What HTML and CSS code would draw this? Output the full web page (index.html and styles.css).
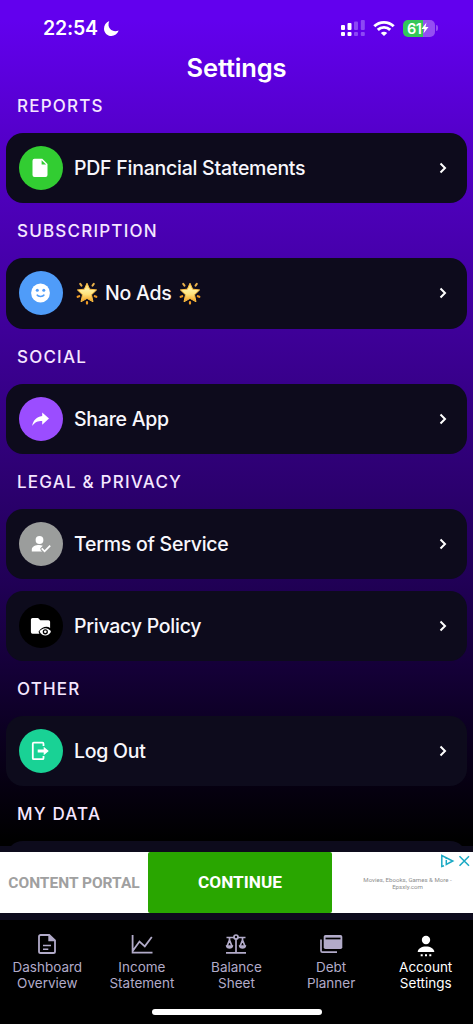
FILE: index.html
```html
<!DOCTYPE html>
<html lang="en">
<head>
<meta charset="utf-8">
<meta name="viewport" content="width=device-width, initial-scale=1">
<title>Settings</title>
<link rel="stylesheet" href="styles.css">
</head>
<body>
<svg width="0" height="0" class="defs" aria-hidden="true">
  <defs>
    <linearGradient id="shine" x1="0" y1="0" x2="0" y2="1"><stop offset="0" stop-color="#ffd55c"/><stop offset=".35" stop-color="#fff0a0"/><stop offset=".6" stop-color="#ffe27a"/><stop offset="1" stop-color="#f59b1c"/></linearGradient>
    <symbol id="star" viewBox="0 0 22 24">
      <path d="M11 2.200l2.700 6 6.900.7-5.100 4.900 1.500 7-6-3.400-6 3.400 1.500-7L1.400 8.900l6.900-.7z" fill="url(#shine)" stroke="#f9bb40" stroke-width="1" stroke-linejoin="round"/>
      <path d="M4.200 2.800l1.300 1.800M17.800 2.800l-1.300 1.800" stroke="#e8b04a" stroke-width="2" stroke-linecap="round"/>
      <path d="M1.700 15.800l1.500-.6M20.300 15.800l-1.500-.6M11 21v1.600" stroke="#ee9a25" stroke-width="2.200" stroke-linecap="round"/>
    </symbol>
    <symbol id="chev" viewBox="0 0 10 14"><path d="M2.500 2.500L7 7l-4.500 4.500" fill="none" stroke="#fff" stroke-width="2"/></symbol>
  </defs>
</svg>
<div class="screen">
  <div class="status">
    <div class="clock"><span class="time">22:54</span>
      <svg width="17" height="17" viewBox="0 0 17 17"><path d="M6.300 1C5 4 5.300 7 7.200 9.100c2 2.200 5.300 2.700 8.500 1.500C14.500 14 11.600 16 8.400 16 4.300 16 1 12.800 1 8.700 1 5.200 3 2.200 6.300 1z" fill="#fff"/></svg>
    </div>
    <div class="signals">
      <svg width="26" height="18" viewBox="0 0 26 18">
        <g fill="#fff"><rect x="1" y="6" width="4" height="5" rx="1"/><rect x="7.500" y="4" width="4" height="7" rx="1"/><rect x="1" y="13" width="4" height="4" rx="1"/><rect x="7.500" y="13" width="4" height="4" rx="1"/></g>
        <g fill="#8c49f4"><rect x="14" y="2.500" width="4" height="8.500" rx="1"/><rect x="20.800" y="1" width="4" height="10" rx="1"/><rect x="14" y="13" width="4" height="4" rx="1"/><rect x="20.800" y="13" width="4" height="4" rx="1"/></g>
      </svg>
      <svg class="wifi" width="22" height="17" viewBox="0 0 22 17"><g fill="none" stroke="#fff" stroke-width="2.900"><path d="M1.300 6.300c5.400-5.300 14-5.300 19.400 0"/><path d="M4.800 9.900c3.500-3.400 8.900-3.400 12.400 0"/></g><path d="M7.800 12.900c1.800-1.700 4.600-1.700 6.400 0L11 16z" fill="#fff"/></svg>
      <div class="battery"><span class="level">61</span><svg width="8" height="12" viewBox="0 0 8 12"><path d="M5.500.5L.5 7h3L2.500 11.500l5-6.500h-3z" fill="#fff"/></svg></div><i class="cap"></i>
    </div>
  </div>
  <h1 class="title">Settings</h1>
  <main class="list">
    <h2 class="heading">REPORTS</h2>
    <div class="card">
      <span class="badge green"><svg width="24" height="24" viewBox="0 0 24 24"><path d="M5.500 2.700h7.800l5.200 5.200v11.200a2 2 0 0 1-2 2h-11a2 2 0 0 1-2-2V4.700a2 2 0 0 1 2-2z" fill="#fff"/><path d="M12.600 4.300v4.300h4.500z" fill="#32cd32"/></svg></span>
      <span class="label">PDF Financial Statements</span><svg class="go"><use href="#chev"/></svg>
    </div>
    <h2 class="heading">SUBSCRIPTION</h2>
    <div class="card">
      <span class="badge blue"><svg width="24" height="24" viewBox="0 0 24 24"><circle cx="11.500" cy="12" r="9.400" fill="#fff"/><g fill="#4f9cf9"><circle cx="8.300" cy="9.200" r="1.500"/><circle cx="14.800" cy="9.200" r="1.500"/></g><path d="M7.800 13.600c1.600 2.500 5.900 2.500 7.500 0" fill="none" stroke="#4f9cf9" stroke-width="1.700"/></svg></span>
      <span class="label ads"><svg class="star"><use href="#star"/></svg><span>No Ads</span><svg class="star"><use href="#star"/></svg></span><svg class="go"><use href="#chev"/></svg>
    </div>
    <h2 class="heading">SOCIAL</h2>
    <div class="card">
      <span class="badge violet"><svg width="24" height="24" viewBox="0 0 24 24"><path d="M13.200 5.500l6.800 6-6.800 6.300v-3.900c-4.600 0-7.600 1.300-10 5C4 14 7 9.800 13.200 9z" fill="#fff"/></svg></span>
      <span class="label">Share App</span><svg class="go"><use href="#chev"/></svg>
    </div>
    <h2 class="heading">LEGAL &amp; PRIVACY</h2>
    <div class="card">
      <span class="badge gray"><svg width="24" height="24" viewBox="0 0 24 24"><circle cx="10.500" cy="8" r="3.900" fill="#fff"/><path d="M2.800 19.500v-2c0-3 4-4.400 7.200-4.400 1.500 0 2.800.3 3.800.7l-2.700 2.800 2.900 2.900z" fill="#fff"/><path d="M12.700 16.400l2.900 2.900 5.600-5.600" fill="none" stroke="#9b9d9c" stroke-width="4"/><path d="M12.700 16.400l2.900 2.900 5.600-5.600" fill="none" stroke="#fff" stroke-width="1.800"/></svg></span>
      <span class="label">Terms of Service</span><svg class="go"><use href="#chev"/></svg>
    </div>
    <div class="card second">
      <span class="badge black"><svg width="24" height="24" viewBox="0 0 24 24"><path d="M3.500 4h5.600l2.200 2.200h8.200a1.600 1.600 0 0 1 1.600 1.600V14c-3.200-2.300-8.600-1.200-11.600 3.800l.9 1.900H3.500a1.600 1.600 0 0 1-1.600-1.600V5.600A1.600 1.600 0 0 1 3.500 4z" fill="#fff"/><path d="M10.600 17.800c2.300-4.800 9.100-4.800 11.400 0-2.300 4.800-9.100 4.800-11.400 0z" fill="#fff"/><circle cx="16.300" cy="17.800" r="2.600"/><circle cx="16.300" cy="17.800" r="1.300" fill="#fff"/></svg></span>
      <span class="label">Privacy Policy</span><svg class="go"><use href="#chev"/></svg>
    </div>
    <h2 class="heading">OTHER</h2>
    <div class="card">
      <span class="badge teal"><svg width="24" height="24" viewBox="0 0 24 24"><path d="M14.500 7V4.700a1 1 0 0 0-1-1H4.800a1 1 0 0 0-1 1v14.500a1 1 0 0 0 1 1h8.700a1 1 0 0 0 1-1V17" fill="none" stroke="#fff" stroke-width="1.800"/><path d="M8.700 10.400h6V7.800l5.100 4.200-5.100 4.200v-2.600h-6z" fill="#fff"/></svg></span>
      <span class="label">Log Out</span><svg class="go"><use href="#chev"/></svg>
    </div>
    <h2 class="heading">MY DATA</h2>
    <div class="card"></div>
  </main>
  <section class="adzone">
    <div class="ad">
      <div class="brand"><span>CONTENT PORTAL</span></div>
      <div class="cta"><span>CONTINUE</span></div>
      <div class="info"><p>Movies, Ebooks, Games &amp; More -<br>Epsxly.com</p>
        <svg class="adicons" width="30" height="14" viewBox="0 0 30 14" fill="none" stroke="#1aa9c4" stroke-width="1.500"><path d="M4 11.800l-2.200.7V1.500L12.800 7l-6.500 3.500V6"/><path d="M6.300 3.700v1.400"/><path d="M19.500 2.200l9.500 9.600M29 2.200l-9.500 9.600"/></svg>
      </div>
    </div>
  </section>
  <nav class="tabs">
    <a class="tab"><svg width="24" height="24" viewBox="0 0 24 24"><path d="M14.200 3H5.600A1.600 1.600 0 0 0 4 4.600v14.800A1.600 1.600 0 0 0 5.600 21h12.800a1.600 1.600 0 0 0 1.600-1.600V8.500z" fill="none" stroke="currentColor" stroke-width="1.800"/><path d="M13.300 2.500v6.800h6.900z" fill="currentColor"/><path d="M8 13.500h8M8 17.300h5.300" stroke="currentColor" stroke-width="1.600"/></svg><span>Dashboard<br>Overview</span></a>
    <a class="tab"><svg width="24" height="24" viewBox="0 0 24 24"><path d="M2.600 3v17.600H22.500M3 18.500l6.500-9 5.300 4.800L21.800 5" fill="none" stroke="currentColor" stroke-width="1.800"/></svg><span>Income<br>Statement</span></a>
    <a class="tab"><svg width="24" height="24" viewBox="0 0 24 24"><g fill="none" stroke="currentColor" stroke-width="1.700"><circle cx="12" cy="5" r="2"/><path d="M12 7v13.500M2 20.800h20M2.500 5.500H10M14 5.500h7.500M5.500 6v2L3 14.300M5.500 8L8 14.300M18.500 6v2L16 14.300M18.500 8l2.500 6.300"/></g><path d="M1.700 13.300h7.600c0 4.700-7.600 4.700-7.600 0zM14.700 13.300h7.600c0 4.700-7.600 4.700-7.600 0z" fill="currentColor"/></svg><span>Balance<br>Sheet</span></a>
    <a class="tab"><svg width="24" height="24" viewBox="0 0 24 24"><path d="M6.500 3h15a1.800 1.800 0 0 1 1.800 1.800v10.400a1.800 1.800 0 0 1-1.800 1.800h-15a1.800 1.800 0 0 1-1.800-1.800V4.800A1.800 1.800 0 0 1 6.500 3z" fill="currentColor"/><path d="M6.500 6.500h15" stroke="#000" stroke-width="1.700"/><path d="M2 7.500v11.300a1.400 1.400 0 0 0 1.400 1.400H18" fill="none" stroke="currentColor" stroke-width="1.700"/></svg><span>Debt<br>Planner</span></a>
    <a class="tab active"><svg width="24" height="26" viewBox="0 0 24 26"><g fill="currentColor"><circle cx="12" cy="8" r="4.200"/><path d="M3.700 20c0-7.500 16.600-7.500 16.600 0z"/><path d="M6.700 22.300h2v2h-2zM11 22.300h2v2h-2zM15.300 22.300h2v2h-2z"/></g></svg><span>Account<br>Settings</span></a>
  </nav>
  <div class="home"></div>
</div>
</body>
</html>
```
FILE: styles.css
```css
* { box-sizing: border-box; }
body { margin: 0; background: #000; }
.defs { position: absolute; }
.screen {
  width: 473px; height: 1024px; overflow: hidden;
  display: flex; flex-direction: column;
  font-family: Inter, "Liberation Sans", sans-serif; color: #fff;
  background: linear-gradient(180deg, #6200ee 0, #6200ee 20px, #5500cc 130px, #3d0096 340px, #200055 585px, #0b0020 735px, #000 840px);
}
.status { height: 54px; padding: 2px 35px 0 43px; display: flex; align-items: center; justify-content: space-between; }
.clock { display: flex; align-items: center; gap: 5px; }
.time { font-size: 19.500px; font-weight: 600; letter-spacing: -.2px; }
.signals { display: flex; align-items: center; }
.wifi { margin-left: 7px; }
.battery {
  margin-left: 8px; width: 32px; height: 17px; border-radius: 5px; padding-left: 4px;
  display: flex; align-items: center; background: linear-gradient(90deg, #34c759 61%, #944ff2 61%);
}
.level { font-size: 14.500px; font-weight: 600; letter-spacing: -.5px; }
.cap { width: 2px; height: 6px; margin-left: 1px; border-radius: 0 3px 3px 0; background: #944ff2; }
.title { margin: 0; height: 28px; line-height: 28px; text-align: center; font-size: 25.500px; font-weight: 600; letter-spacing: -.15px; }
.list { height: 764px; overflow: hidden; padding: 0 6px; display: flex; flex-direction: column; }
.heading { margin: 0; flex: none; height: 54.900px; padding: 1px 11px 0; line-height: 54px; font-size: 17px; font-weight: 450; letter-spacing: 1.200px; color: #f5e6ff; }
.heading:first-child { height: 51px; padding-top: 0; line-height: 48px; }
.card { flex: none; height: 70.400px; padding: 0 19px 0 13px; border-radius: 17px; background: #0d0b1c; display: flex; align-items: center; }
.second { margin-top: 11.500px; }
.badge { width: 44px; height: 44px; border-radius: 50%; display: flex; align-items: center; justify-content: center; }
.green { background: #32cd32; }
.blue { background: #4f9cf9; }
.violet { background: #9b4dff; }
.gray { background: #9b9d9c; }
.black { background: #000; }
.teal { background: #19d295; }
.label { margin-left: 11px; font-size: 19.500px; line-height: 24px; font-weight: 450; letter-spacing: -.25px; color: #f8f7fc; white-space: nowrap; }
.ads { margin-left: 12.500px; display: flex; align-items: center; gap: 7.500px; }
.star { width: 22px; height: 24px; }
.go { width: 10px; height: 14px; margin-left: auto; }
.adzone { height: 74px; padding: 6px 0; background: #0d0b1c; }
.ad { height: 61px; display: flex; background: #fff; font-family: Roboto, sans-serif; }
.brand { width: 148px; display: flex; align-items: center; justify-content: center; font-size: 15.500px; font-weight: 700; color: #a0a0a0; white-space: nowrap; }
.cta { width: 184px; padding-bottom: 2px; border-radius: 2px; background: #29a600; display: flex; align-items: center; justify-content: center; font-size: 17.200px; font-weight: 700; }
.info { flex: 1; position: relative; padding-left: 10px; display: flex; align-items: center; justify-content: center; }
.info p { margin: 1px 0 0; font-size: 6.100px; line-height: 7px; text-align: center; color: #8e8e8e; white-space: nowrap; }
.adicons { position: absolute; right: 3px; top: 2px; }
.tabs { height: 104px; background: #000; display: grid; grid-template-columns: repeat(5, 1fr); padding-top: 12px; }
.tab { display: flex; flex-direction: column; align-items: center; gap: 3px; color: #b2abc9; font-size: 13.500px; line-height: 16px; letter-spacing: 0; text-align: center; }
.active { color: #fff; gap: 1px; }
.home { width: 170px; height: 6px; margin: -15px auto 0; border-radius: 3px; background: #fff; flex: none; }
```
